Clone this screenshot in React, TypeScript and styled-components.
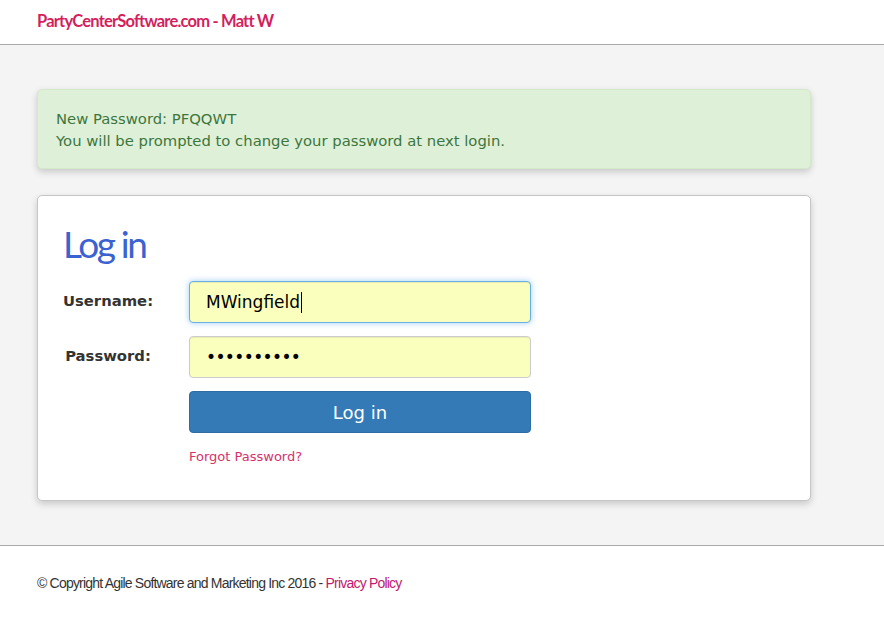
import styled, { createGlobalStyle } from "styled-components";

const GlobalStyle = createGlobalStyle`
  html, body {
    margin: 0;
    padding: 0;
    background: #ffffff;
  }
`;

const Page = styled.div`
  width: 884px;
  min-height: 626px;
  display: flex;
  flex-direction: column;
`;

const Header = styled.header`
  height: 44px;
  padding-left: 37px;
  display: flex;
  align-items: center;
  border-bottom: 1px solid #a9a9a9;
`;

const Brand = styled.div`
  font-family: Lato, "Open Sans", sans-serif;
  font-weight: 700;
  font-size: 16.5px;
  letter-spacing: -0.8px;
  color: #d41f5e;
  margin-top: -2px;
`;

const Main = styled.main`
  background: #f4f4f4;
  padding: 44px 73px 44px 37px;
  display: flex;
  flex-direction: column;
  gap: 26px;
  border-bottom: 1px solid #a9a9a9;
`;

const Alert = styled.div`
  background: #dff0d8;
  border: 1px solid #d4e8ca;
  border-radius: 5px;
  box-shadow: 0 3px 7px rgba(0, 0, 0, 0.18);
  padding: 18px 18px 16px;
  font-family: "DejaVu Sans", Verdana, sans-serif;
  font-size: 14.8px;
  line-height: 22px;
  color: #3c763d;
`;

const Card = styled.section`
  background: #ffffff;
  border: 1px solid #c6c6c6;
  border-radius: 5px;
  box-shadow: 0 3px 7px rgba(0, 0, 0, 0.18);
  padding: 25px 25px 36px;
`;

const Title = styled.h1`
  margin: 0 0 14px;
  font-family: Lato, "Open Sans", sans-serif;
  font-weight: 400;
  font-size: 37px;
  line-height: 46px;
  letter-spacing: -2.4px;
  color: #3b62d1;
`;

const Form = styled.div`
  display: grid;
  grid-template-columns: 90px 342px;
  column-gap: 36px;
  row-gap: 13px;
  align-items: center;
`;

const Label = styled.label`
  font-family: "DejaVu Sans", Verdana, sans-serif;
  font-weight: 700;
  font-size: 14.8px;
  color: #333333;
  text-align: center;
  white-space: nowrap;
  margin-top: -3px;
`;

const Field = styled.div<{ $focused?: boolean }>`
  box-sizing: border-box;
  height: 42px;
  padding: 0 16px;
  display: flex;
  align-items: center;
  background: #faffbd;
  border: 1px solid ${(p) => (p.$focused ? "#66afe9" : "#cccccc")};
  border-radius: 4px;
  box-shadow: ${(p) =>
    p.$focused
      ? "inset 0 1px 1px rgba(0,0,0,.075), 0 0 6px rgba(102,175,233,.6)"
      : "inset 0 1px 1px rgba(0,0,0,.075)"};
  font-family: "DejaVu Sans", Verdana, sans-serif;
  font-size: 17px;
  color: #000000;
`;

const Caret = styled.span`
  display: inline-block;
  width: 1px;
  height: 21px;
  background: #000000;
  margin-left: 1px;
`;

const Dots = styled.span`
  font-size: 17px;
  letter-spacing: -0.6px;
`;

const Spacer = styled.div``;

const Button = styled.button`
  box-sizing: border-box;
  height: 42px;
  width: 100%;
  background: #337ab7;
  border: 1px solid #2e6da4;
  border-radius: 4px;
  color: #ffffff;
  font-family: "DejaVu Sans", Verdana, sans-serif;
  font-size: 18px;
  cursor: pointer;
`;

const Forgot = styled.a`
  font-family: "DejaVu Sans", Verdana, sans-serif;
  font-size: 13px;
  color: #d9306b;
  text-decoration: none;
  margin-top: 3px;
`;

const Footer = styled.footer`
  padding: 29px 37px;
  font-family: "Liberation Sans", Arial, sans-serif;
  font-size: 14px;
  letter-spacing: -0.8px;
  color: #333333;
`;

const PolicyLink = styled.a`
  color: #c2176e;
  text-decoration: none;
`;

export default function App() {
  return (
    <Page>
      <GlobalStyle />
      <Header>
        <Brand>PartyCenterSoftware.com - Matt W</Brand>
      </Header>
      <Main>
        <Alert>
          New Password: PFQQWT
          <br />
          You will be prompted to change your password at next login.
        </Alert>
        <Card>
          <Title>Log in</Title>
          <Form>
            <Label>Username:</Label>
            <Field $focused role="textbox">
              MWingfield
              <Caret />
            </Field>
            <Label>Password:</Label>
            <Field role="textbox">
              <Dots>••••••••••</Dots>
            </Field>
            <Spacer />
            <Button>Log in</Button>
            <Spacer />
            <Forgot href="#">Forgot Password?</Forgot>
          </Form>
        </Card>
      </Main>
      <Footer>
        © Copyright Agile Software and Marketing Inc 2016 -{" "}
        <PolicyLink href="#">Privacy Policy</PolicyLink>
      </Footer>
    </Page>
  );
}
